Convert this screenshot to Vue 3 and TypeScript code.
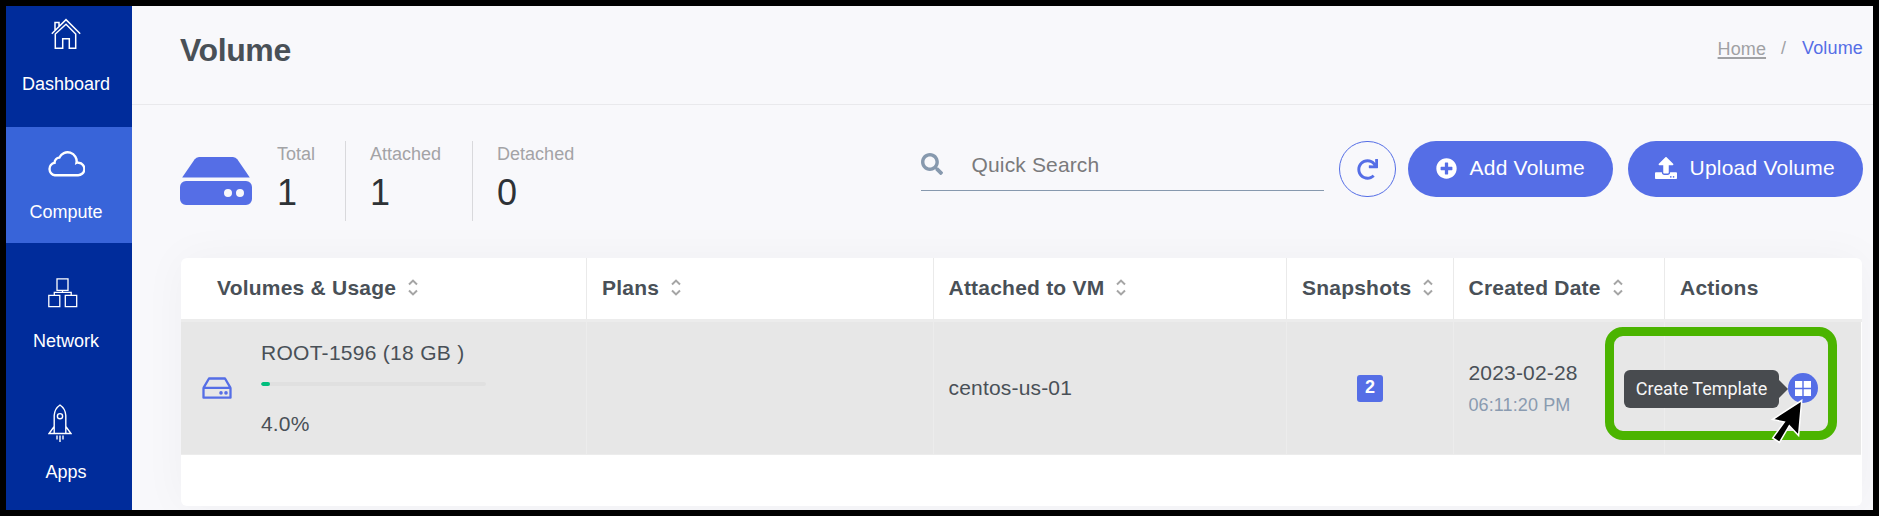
<script setup lang="ts">
interface NavItem { id: string; label: string; active?: boolean }
interface Stat { label: string; value: number }
interface Column { title: string; sortable: boolean }

const nav: NavItem[] = [
  { id: 'dashboard', label: 'Dashboard' },
  { id: 'compute', label: 'Compute', active: true },
  { id: 'network', label: 'Network' },
  { id: 'apps', label: 'Apps' },
]
const stats: Stat[] = [
  { label: 'Total', value: 1 },
  { label: 'Attached', value: 1 },
  { label: 'Detached', value: 0 },
]
const columns: Column[] = [
  { title: 'Volumes & Usage', sortable: true },
  { title: 'Plans', sortable: true },
  { title: 'Attached to VM', sortable: true },
  { title: 'Snapshots', sortable: true },
  { title: 'Created Date', sortable: true },
  { title: 'Actions', sortable: false },
]
const usage = 4
</script>

<template>
  <div class="frame">
    <nav class="side">
      <a v-for="n in nav" :key="n.id" class="nav-item" :class="[n.id, { active: n.active }]">
        <span class="nav-icon">
          <svg v-if="n.id === 'dashboard'" width="32" height="32" viewBox="0 0 32 32" fill="none" stroke="#fff" stroke-width="1.5">
            <path d="M1.8 15.8 16 1.6 30.2 15.8M5 12.6V4.4h4v4M5.3 16V30.3h7.4v-9.6h6.6v9.6h6.4V16L16 6.2z" />
          </svg>
          <svg v-else-if="n.id === 'compute'" width="38" height="26" viewBox="0 0 38 26" fill="none" stroke="#fff" stroke-width="2.4">
            <path d="M7.800 24.200H30.500a6.200 6.200 0 0 0 1.200-12.500q-1.500-.3-2.200.1A9 9 0 0 0 12.400 6.600 5 5 0 0 0 7.600 11.800 6.300 6.300 0 0 0 7.800 24.200z" />
          </svg>
          <svg v-else-if="n.id === 'network'" width="30" height="30" viewBox="0 0 30 30" fill="none" stroke="#fff" stroke-width="1.3">
            <path d="M9 .9h11v11.4H9zM.8 17.3h11v11.4h-11zM17.3 17.3h11.4v11.4H17.3zM14.5 12.3v2.2M6.3 17v-2.6h16.9V17" />
          </svg>
          <svg v-else width="24" height="38" viewBox="0 0 24 38" fill="none" stroke="#fff" stroke-width="1.4">
            <path d="M6.2 29V11.5C6.5 6.500 9 3 12 1c3 2 5.500 5.500 5.800 10.500V29M6.200 22.500 1 29.500h22l-5.200-7M9 31.500v4M12 31.500v6.500M15 31.500v4" />
            <circle cx="12" cy="12.200" r="2.600" />
          </svg>
        </span>
        <span class="nav-label">{{ n.label }}</span>
      </a>
    </nav>

    <main class="main">
      <header class="head">
        <h1>Volume</h1>
        <div class="crumbs">
          <a class="home">Home</a><span class="sep">/</span><span class="here">Volume</span>
        </div>
      </header>

      <section class="toolbar">
        <svg class="hdd" width="72" height="48" viewBox="0 0 72 48" fill="#556ee6">
          <path d="M2.200 20.500 14.500 2.500Q16.300 0 19 0H53Q55.700 0 57.500 2.500L69.800 20.500z" />
          <path fill-rule="evenodd" d="M6 24H66a6 6 0 0 1 6 6V42a6 6 0 0 1-6 6H6a6 6 0 0 1-6-6V30a6 6 0 0 1 6-6zM48 32a4 4 0 1 0 0 8 4 4 0 0 0 0-8zM60 32a4 4 0 1 0 0 8 4 4 0 0 0 0-8z" />
        </svg>
        <div class="stats">
          <div v-for="s in stats" :key="s.label" class="stat">
            <span class="stat-label">{{ s.label }}</span>
            <span class="stat-value">{{ s.value }}</span>
          </div>
        </div>
        <div class="search">
          <svg width="22" height="22" viewBox="0 0 512 512" fill="#8799ae">
            <path d="M505 442.700 405.300 343c-4.500-4.500-10.600-7-17-7H372c27.600-35.300 44-79.700 44-128C416 93.100 322.900 0 208 0S0 93.100 0 208s93.100 208 208 208c48.300 0 92.700-16.400 128-44v16.300c0 6.400 2.500 12.500 7 17l99.700 99.700c9.400 9.400 24.600 9.400 33.900 0l28.300-28.300c9.400-9.400 9.400-24.600.1-34zM208 336c-70.700 0-128-57.200-128-128 0-70.700 57.200-128 128-128 70.700 0 128 57.200 128 128 0 70.700-57.200 128-128 128z" />
          </svg>
          <span>Quick Search</span>
        </div>
        <button class="refresh">
          <svg width="21" height="21" viewBox="0 0 512 512" fill="#556ee6">
            <path d="M500.300 0h-47.400c-6.600 0-12 5.400-12 12.600l4 82.800C399.400 42.300 332 8 256.300 8 119.300 8 7.900 119.500 8 256.500 8.100 393.400 119.100 504 256 504c63.900 0 122.200-24.200 166.200-63.900 5.100-4.500 5.300-12.400.5-17.200l-34-34c-4.500-4.500-11.700-4.700-16.400-.5C341.200 415.600 300.600 432 256 432c-97.300 0-176-78.700-176-176 0-97.300 78.700-176 176-176 60.900 0 114.500 30.800 146.100 77.600l-101.500-4.900c-6.800-.3-12.600 5.100-12.600 12v47.400c0 6.600 5.400 12 12 12h200.300c6.600 0 12-5.400 12-12V12c0-6.600-5.400-12-12-12z" />
          </svg>
        </button>
        <button class="pill add">
          <svg width="21" height="21" viewBox="0 0 512 512" fill="#fff">
            <path d="M256 8C119 8 8 119 8 256s111 248 248 248 248-111 248-248S393 8 256 8zm144 276c0 6.600-5.400 12-12 12h-92v92c0 6.600-5.400 12-12 12h-56c-6.600 0-12-5.400-12-12v-92h-92c-6.600 0-12-5.400-12-12v-56c0-6.600 5.400-12 12-12h92v-92c0-6.600 5.400-12 12-12h56c6.600 0 12 5.400 12 12v92h92c6.600 0 12 5.400 12 12v56z" />
          </svg>
          <span>Add Volume</span>
        </button>
        <button class="pill upload">
          <svg width="22" height="22" viewBox="0 0 512 512" fill="#fff">
            <path d="M296 384h-80c-13.300 0-24-10.700-24-24V192h-87.700c-17.800 0-26.700-21.500-14.100-34.100L242.300 5.700c7.500-7.500 19.800-7.500 27.300 0l152.200 152.200c12.600 12.600 3.700 34.100-14.100 34.100H320v168c0 13.300-10.700 24-24 24zm216-8v112c0 13.300-10.700 24-24 24H24c-13.300 0-24-10.700-24-24V376c0-13.300 10.700-24 24-24h136v8c0 30.900 25.100 56 56 56h80c30.900 0 56-25.100 56-56v-8h136c13.300 0 24 10.700 24 24zm-124 88c0-11-9-20-20-20s-20 9-20 20 9 20 20 20 20-9 20-20zm64 0c0-11-9-20-20-20s-20 9-20 20 9 20 20 20 20-9 20-20z" />
          </svg>
          <span>Upload Volume</span>
        </button>
      </section>

      <section class="card">
        <div class="grid thead">
          <div v-for="c in columns" :key="c.title" class="cell">
            <span>{{ c.title }}</span>
            <svg v-if="c.sortable" class="sort" width="10" height="17" viewBox="0 0 10 17" fill="none" stroke="#a5a5a5" stroke-width="2">
              <path d="M1 5.500 5 1.600 9 5.500M1 11.500 5 15.400 9 11.500" />
            </svg>
          </div>
        </div>
        <div class="grid row">
          <div class="cell volume">
            <svg width="30" height="22" viewBox="0 0 30 22" fill="none" stroke="#556ee6" stroke-width="2.300" stroke-linejoin="round">
              <path d="M1.500 10.800 7 1.500H23L28.500 10.800M1.500 10.800H28.500V20.700H1.500z" />
              <g fill="#556ee6" stroke="none"><circle cx="19" cy="15.900" r="1.800" /><circle cx="24" cy="15.900" r="1.800" /></g>
            </svg>
            <div class="usage">
              <span class="name">ROOT-1596 (18 GB )</span>
              <div class="bar"><i :style="{ width: usage + '%' }"></i></div>
              <span>{{ usage.toFixed(1) }}%</span>
            </div>
          </div>
          <div class="cell"></div>
          <div class="cell vm">centos-us-01</div>
          <div class="cell snap"><b>2</b></div>
          <div class="cell created">
            <span>2023-02-28</span>
            <small>06:11:20 PM</small>
          </div>
          <div class="cell actions">
            <div class="action">
              <svg width="16" height="15" viewBox="0 0 16 15" fill="#fff">
                <path d="M0 0h7.300v6.800H0zM8.700 0H16v6.800H8.700zM0 8.200h7.300V15H0zM8.700 8.200H16V15H8.700z" />
              </svg>
              <div class="highlight"></div>
              <div class="tip">Create Template</div>
              <svg class="cursor" width="40" height="50" viewBox="0 0 40 50" stroke="#fff" stroke-width="1.500">
                <path d="M33.700 3.500 4.500 22.500 16.300 25 4.700 41 11.500 45.500 21.300 28.700 30.600 38.500z" />
              </svg>
            </div>
          </div>
        </div>
      </section>
    </main>
  </div>
</template>

<style>
body { margin: 0; overflow: hidden; }
</style>

<style scoped>
* { box-sizing: border-box; }
.frame {
  width: 1879px; height: 516px; border: 6px solid #000; overflow: hidden;
  display: flex; background: #f8f8fb; color: #495057;
  font-family: "Liberation Sans", Arial, sans-serif; font-size: 21px;
}
.side { width: 126px; flex: none; background: #002c9b; color: #fff; }
.nav-item { display: flex; flex-direction: column; align-items: center; height: 116px; margin-bottom: 13px; padding-right: 6px; }
.nav-item.dashboard { height: 121px; margin-bottom: 0; }
.nav-item.active { background: #3864d9; }
.nav-icon { height: 62px; display: flex; align-items: center; justify-content: center; }
.nav-label { font-size: 18px; line-height: 20px; margin-top: 11px; }
.dashboard .nav-icon { height: 56px; }
.dashboard .nav-label { margin-top: 12px; }
.compute .nav-icon { height: 73px; }
.compute .nav-label { margin-top: 2px; }
.network .nav-icon { height: 74px; margin-right: 7px; }
.network .nav-label { margin-top: 1px; }
.apps .nav-icon { height: 75px; margin-right: 12px; }
.apps .nav-label { margin-top: 2px; }

.main { flex: 1; min-width: 0; }
.head {
  height: 99px; border-bottom: 1px solid #e9e9ec; padding: 0 10px 0 48px;
  display: flex; justify-content: space-between; align-items: flex-start;
}
h1 { margin: 25px 0 0; font-weight: 700; font-size: 32px; line-height: 38px; letter-spacing: -.4px; }
.crumbs { font-size: 18px; line-height: 22px; margin-top: 31px; display: flex; color: #a0a1a4; }
.home { text-decoration: underline; text-decoration-thickness: 2px; text-underline-offset: 2px; position: relative; top: 1px; letter-spacing: .1px; }
.sep { margin: 0 16px 0 15px; }
.here { color: #556ee6; letter-spacing: .15px; }

.toolbar { height: 153px; padding: 36px 10px 0 48px; display: flex; align-items: flex-start; }
.hdd { margin-top: 16px; }
.stats { display: flex; height: 80px; margin-left: 1px; }
.stat { display: flex; flex-direction: column; padding: 0 31px 0 24px; border-right: 1px solid #d9d9dc; }
.stat:first-child { padding-right: 30px; }
.stat:last-child { border: 0; }
.stat-label { font-size: 18px; line-height: 20px; margin-top: 3px; color: #a3a3a6; }
.stat-value { font-size: 36px; line-height: 40px; margin-top: 9px; color: #2e3236; }
.search {
  width: 403px; height: 50px; margin-left: auto; border-bottom: 1px solid #8799ae; color: #7a7a7c;
  display: flex; align-items: flex-start; padding-top: 12px;
}
.search span { margin-left: 28.5px; line-height: 24px; letter-spacing: .15px; }
button { font: inherit; padding: 0; margin: 0; height: 56px; display: flex; align-items: center; border: 0; }
.refresh { width: 57px; margin-left: 15px; justify-content: center; background: none; border: 1px solid #556ee6; border-radius: 28px; }
.pill { background: #556ee6; color: #fff; border-radius: 28px; padding-left: 28px; padding-bottom: 2px; }
.pill span { margin-left: 12.5px; letter-spacing: .22px; }
.add { width: 205px; margin-left: 12px; }
.upload { width: 235px; margin-left: 15px; padding-left: 27px; }

.card {
  margin-left: 49px; width: 1681px; height: 248px; background: #fff; border-radius: 6px;
  box-shadow: 0 0 45px rgba(18, 38, 63, .04);
}
.grid { display: grid; grid-template-columns: 406px 347px 353px 167px 211px 1fr; }
.cell { border-right: 1px solid #eaeaea; padding-left: 15px; display: flex; align-items: center; }
.cell:last-child { border: 0; }
.thead { height: 64px; border-bottom: 3px solid #ececec; font-weight: 700; }
.thead .cell { padding-bottom: 2px; letter-spacing: .22px; white-space: nowrap; }
.thead .cell:first-child { padding-left: 36px; }
.thead .cell:nth-child(3), .thead .cell:nth-child(5), .vm, .row .created { padding-left: 14.5px; }
.sort { margin-left: 12px; }
.row { height: 133px; background: #e7e7e7; border-bottom: 1px solid #ececec; margin-right: 1px; letter-spacing: .18px; }
.row .cell { border-right-color: #ececec; }
.row .volume { padding-left: 21px; }
.usage { margin-left: 29px; display: flex; flex-direction: column; line-height: 24px; }
.name { letter-spacing: .28px; }
.bar { width: 225px; height: 4px; background: #e0e0e0; border-radius: 3px; margin: 17px 0 26px; overflow: hidden; }
.bar i { display: block; height: 4px; background: #00be7d; border-radius: 3px; }
.snap { justify-content: center; padding-left: 0; }
.snap b { width: 26px; height: 27px; line-height: 25px; border-radius: 3px; background: #556ee6; color: #fff; font-size: 18px; text-align: center; }
.row .created { flex-direction: column; align-items: flex-start; justify-content: center; }
.created span { line-height: 24px; }
.created small { font-size: 18px; line-height: 20px; margin-top: 10px; color: #8a9bb0; letter-spacing: .1px; }
.row .actions { padding-left: 123px; }
.action { width: 30px; height: 30px; border-radius: 50%; background: #556ee6; position: relative; display: flex; align-items: center; justify-content: center; letter-spacing: 0; }
.highlight { position: absolute; left: -183px; top: -46px; width: 232px; height: 113px; border: 9px solid #4bb400; border-radius: 18px; }
.tip {
  position: absolute; right: 39px; top: -3px; width: 155px; height: 38px; border-radius: 6px; background: #484b4f; color: #f6f6f6;
  font: 18px/38px Roboto, sans-serif; text-align: center; white-space: nowrap;
}
.tip::after { content: ""; position: absolute; left: 100%; top: 10px; border: solid transparent; border-width: 9px 0 9px 9px; border-left-color: #484b4f; }
.cursor { position: absolute; left: -20px; top: 24px; }
</style>
